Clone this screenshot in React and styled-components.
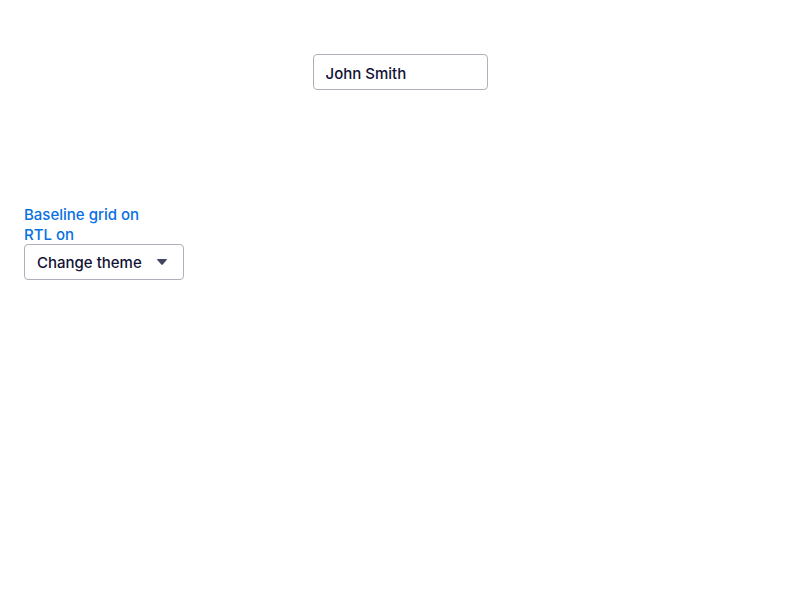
import React from "react";
import styled, { createGlobalStyle, css } from "styled-components";

const GlobalStyle = createGlobalStyle`
  * {
    box-sizing: border-box;
  }
  body {
    margin: 0;
    background: #ffffff;
    color: #111236;
    font-family: Inter, "Liberation Sans", sans-serif;
    font-size: 15px;
    font-weight: 500;
    line-height: 18px;
  }
`;

const field = css`
  height: 36px;
  margin: 0;
  border: 1px solid #b2aebd;
  border-radius: 4px;
  background: #ffffff;
  color: #111236;
  font: inherit;
`;

const Page = styled.div`
  display: flex;
  flex-direction: column;
  gap: 114px;
  padding: 54px 24px 24px;
`;

const Story = styled.main`
  display: flex;
  justify-content: center;
`;

const NameInput = styled.input`
  ${field}
  width: 175px;
  padding: 2px 12px 0;
`;

const Controls = styled.aside`
  display: flex;
  flex-direction: column;
  align-items: flex-start;
`;

const ToggleLink = styled.a`
  padding-top: 2px;
  color: #0770e3;
  text-decoration: none;
`;

const ThemePicker = styled.div`
  display: grid;
  align-items: center;
  width: 160px;
`;

const ThemeSelect = styled.select`
  ${field}
  grid-area: 1 / 1;
  width: 100%;
  padding: 2px 32px 0 12px;
  appearance: none;
`;

const Caret = styled.svg`
  grid-area: 1 / 1;
  justify-self: end;
  margin-right: 16px;
  fill: #444560;
  pointer-events: none;
`;

export default function App() {
  return (
    <>
      <GlobalStyle />
      <Page>
        <Story>
          <NameInput type="text" aria-label="Name" defaultValue="John Smith" />
        </Story>
        <Controls>
          <ToggleLink href="#grid">Baseline grid on</ToggleLink>
          <ToggleLink href="#rtl">RTL on</ToggleLink>
          <ThemePicker>
            <ThemeSelect aria-label="Theme">
              <option>Change theme</option>
            </ThemeSelect>
            <Caret width="12" height="8" viewBox="0 0 12 8" aria-hidden="true">
              <path d="M1.8 1h8.4q1.3 0 .5 1L7 6.3q-1 1-2 0L1.3 2q-.8-1 .5-1z" />
            </Caret>
          </ThemePicker>
        </Controls>
      </Page>
    </>
  );
}
